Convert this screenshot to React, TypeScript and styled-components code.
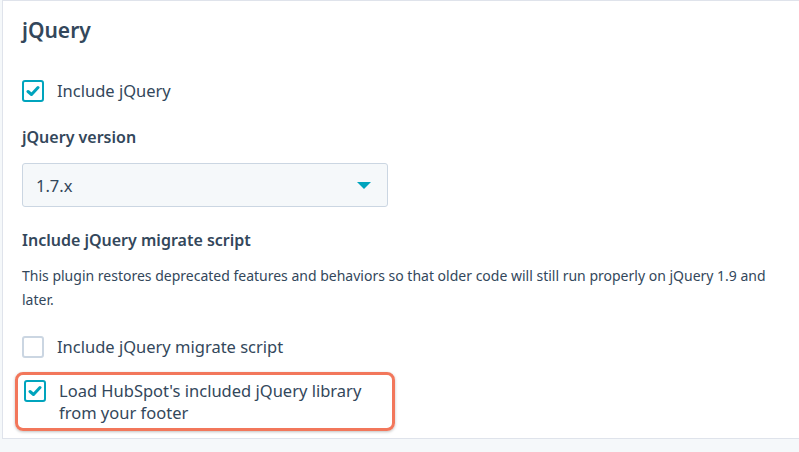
import React from "react";
import styled, { createGlobalStyle } from "styled-components";

const Global = createGlobalStyle`
  html, body { margin: 0; background: #f5f8fa; }
  body { font-family: "Noto Sans", Lato, sans-serif; color: #33475b; }
`;

const Panel = styled.div`
  margin: 0 0 0 2px;
  height: 439px;
  box-sizing: border-box;
  background: #fff;
  border: 1px solid #dfe3eb;
  border-right: none;
  padding: 13px 0 0 19px;
  display: flex;
  flex-direction: column;
`;

const Title = styled.h2`
  margin: 0;
  font-size: 21px;
  font-weight: 600;
  line-height: 32px;
`;

const Row = styled.label<{ $mt: number }>`
  display: flex;
  align-items: flex-start;
  gap: 13px;
  margin-top: ${p => p.$mt}px;
  font-size: 16.5px;
  line-height: 22px;
`;

const Box = styled.span<{ $checked: boolean }>`
  flex: none;
  width: 22px;
  height: 22px;
  box-sizing: border-box;
  border-radius: 3px;
  border: 2px solid ${p => (p.$checked ? "#00a4bd" : "#cbd6e2")};
  background: #fff;
  display: flex;
  align-items: center;
  justify-content: center;
`;

const Label = styled.div<{ $mt: number }>`
  margin-top: ${p => p.$mt}px;
  font-size: 16px;
  font-weight: 600;
  line-height: 22px;
`;

const Select = styled.div`
  margin-top: 15px;
  width: 366px;
  height: 44px;
  box-sizing: border-box;
  background: #f5f8fa;
  border: 1px solid #cbd6e2;
  border-radius: 3px;
  display: flex;
  align-items: center;
  justify-content: space-between;
  padding: 0 16px 0 13px;
  font-size: 16.5px;
`;

const Caret = styled.span`
  width: 0;
  height: 0;
  border-left: 7px solid transparent;
  border-right: 7px solid transparent;
  border-top: 7px solid #00a4bd;
`;

const Desc = styled.p`
  margin: 13px 0 0;
  font-size: 14px;
  line-height: 24px;
  max-width: 770px;
`;

const Highlight = styled.div`
  margin: 14px 0 0 -7px;
  width: 380px;
  box-sizing: border-box;
  border: 3px solid #f2775b;
  border-radius: 8px;
  padding: 5px 0 4px 6px;
  box-shadow: 0 1px 3px rgba(0,0,0,0.25);
`;

const Check = ({ on }: { on: boolean }) => (
  <Box $checked={on}>
    {on && (
      <svg width="14" height="12" viewBox="0 0 14 12">
        <path d="M2 6.5 L5.5 9.5 L12 2.5" stroke="#00a4bd" strokeWidth="3" fill="none" strokeLinecap="round" strokeLinejoin="round" />
      </svg>
    )}
  </Box>
);

export default function App() {
  return (
    <>
      <Global />
      <Panel>
        <Title>jQuery</Title>
        <Row $mt={34}><Check on /> Include jQuery</Row>
        <Label $mt={24}>jQuery version</Label>
        <Select>1.7.x<Caret /></Select>
        <Label $mt={22}>Include jQuery migrate script</Label>
        <Desc>This plugin restores deprecated features and behaviors so that older code will still run properly on jQuery 1.9 and later.</Desc>
        <Row $mt={24}><Check on={false} /> Include jQuery migrate script</Row>
        <Highlight>
          <Row $mt={0}><Check on /><span>Load HubSpot's included jQuery library<br />from your footer</span></Row>
        </Highlight>
      </Panel>
    </>
  );
}
